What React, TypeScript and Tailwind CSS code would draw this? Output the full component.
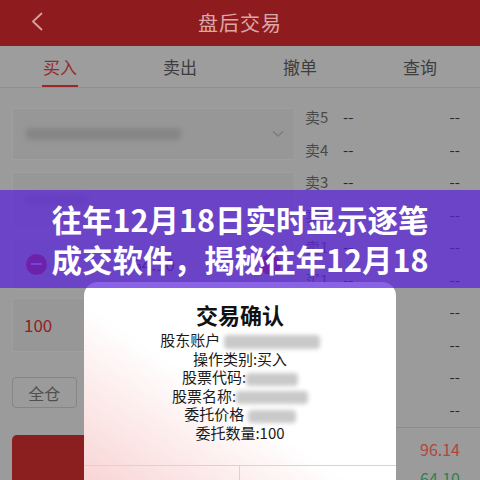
import React from 'react'

const rows = ['卖5', '卖4', '卖3', '卖2', '卖1', '买1', '买2', '买3', '买4', '买5']

const tabs = ['买入', '卖出', '撤单', '查询']

function Blur({ className, dark }: { className: string; dark?: boolean }) {
  return (
    <span
      className={`inline-block rounded-sm align-middle ${dark ? 'bg-[#868686] blur-[2.5px]' : 'bg-[#c9c9c9] blur-[2px]'} ${className}`}
    />
  )
}

function Header() {
  return (
    <div className="relative flex h-[46px] items-center justify-center bg-[#8e1c1e]">
      <svg className="absolute left-[31px] top-[12px]" width="12" height="19" viewBox="0 0 12 19" fill="none">
        <path d="M10.5 1.5 L2 9.5 L10.5 17.5" stroke="#d3a3a3" strokeWidth="1.8" strokeLinecap="round" strokeLinejoin="round" />
      </svg>
      <span className="text-[20px] leading-none tracking-[1px] text-[#dca7a7]">盘后交易</span>
    </div>
  )
}

function Tabs() {
  return (
    <div className="grid h-[42px] grid-cols-4 border-b border-[#8f8f8f] bg-[#9d9d9d]">
      {tabs.map((t, i) => (
        <div key={t} className="relative flex items-center justify-center">
          <span className={`text-[17px] leading-none ${i === 0 ? 'text-[#9a2828]' : 'text-[#3d3d3d]'}`}>{t}</span>
          {i === 0 && <span className="absolute bottom-[0px] h-[2px] w-[36px] bg-[#9a2828]" />}
        </div>
      ))}
    </div>
  )
}

function LeftPanel() {
  return (
    <div className="ml-[12px] flex w-[283px] flex-col pt-[20px]">
      <div className="flex h-[52px] items-center justify-between border border-[#9f9f9f] bg-[#979797] pl-[13px] pr-[10px]">
        <Blur dark className="h-[12px] w-[155px]" />
        <svg width="12" height="8" viewBox="0 0 12 8" fill="none">
          <path d="M1 1.5 L6 6 L11 1.5" stroke="#7c7c7c" strokeWidth="1.4" />
        </svg>
      </div>
      <div className="mt-[12px] h-[56px] border border-[#9f9f9f] bg-[#979797] pl-[13px] pt-[12px]">
        <Blur dark className="h-[10px] w-[62px]" />
      </div>
      <div className="mt-[10px] flex h-[52px] items-center justify-between border border-[#9f9f9f] bg-[#979797] px-[13px]">
        <span className="flex h-[21px] w-[21px] items-center justify-center rounded-full bg-[#9a2a3a]">
          <span className="h-[2px] w-[11px] bg-[#b89ad8]" />
        </span>
        <span className="text-[17px] text-[#333]">64.10</span>
        <span className="flex h-[21px] w-[21px] items-center justify-center rounded-full bg-[#9a2a3a]" />
      </div>
      <div className="mt-[8px] flex h-[54px] items-center border border-[#9f9f9f] bg-[#979797] pl-[11px]">
        <span className="text-[17px] text-[#8e2222]">100</span>
      </div>
      <div className="mt-[25px] grid h-[31px] grid-cols-4 gap-[8px]">
        {['全仓', '1/2', '1/3', '1/4'].map((b) => (
          <div key={b} className="flex items-center justify-center rounded-[4px] border border-[#858585] text-[16px] text-[#505050]">
            {b}
          </div>
        ))}
      </div>
      <div className="mt-[27px] h-[50px] rounded-[5px] bg-[#8b1f1f]" />
    </div>
  )
}

function OrderBook() {
  return (
    <div className="ml-[10px] flex w-[175px] flex-col pt-[13px]">
      {rows.map((r) => (
        <div key={r} className="flex h-[32.5px] items-center pr-[20px] text-[15px]">
          <span className="w-[38px] text-[#4a4a4a]">{r}</span>
          <span className="text-[#2a2a2a]">--</span>
          <span className="flex-1" />
          <span className="text-[#2a2a2a]">--</span>
        </div>
      ))}
      <div className="mt-[1px] flex flex-col items-end border-t border-[#8c8c8c] pr-[20px] pt-[10px] text-[16px]">
        <span className="leading-[22px] text-[#b3443e]">96.14</span>
        <span className="mt-[7px] leading-[22px] text-[#2f7f4f]">64.10</span>
      </div>
    </div>
  )
}

function Dialog() {
  return (
    <div className="absolute left-[84px] top-[282px] flex h-[210px] w-[312px] flex-col rounded-t-[14px] bg-linear-to-tr from-[#f8d2d2] via-white via-[45%] to-white">
      <div className="pt-[17px] text-center text-[22px] font-bold leading-[30px] text-[#111]">交易确认</div>
      <div className="mt-[2px] flex flex-col items-center text-[15px] leading-[18.6px] text-[#1a1a1a]">
        <div>
          股东账户 <Blur className="h-[14px] w-[96px]" />
        </div>
        <div>操作类别:买入</div>
        <div>
          股票代码:<Blur className="h-[13px] w-[52px]" />
        </div>
        <div>
          股票名称:<Blur className="h-[13px] w-[72px]" />
        </div>
        <div>
          委托价格 <Blur className="h-[13px] w-[48px]" />
        </div>
        <div>委托数量:100</div>
      </div>
      <div className="mt-auto grid h-[27px] grid-cols-2 border-t border-[#efcaca]">
        <div className="border-r border-[#efcaca]" />
        <div />
      </div>
    </div>
  )
}

function Banner() {
  return (
    <div className="absolute inset-x-0 top-[190px] flex h-[98px] flex-col items-center justify-center bg-[#581fdb]/70">
      <div className="text-center text-[30.5px] font-bold leading-[40px] text-white">
        <div>往年12月18日实时显示逐笔</div>
        <div>成交软件，揭秘往年12月18</div>
      </div>
    </div>
  )
}

export default function App() {
  return (
    <div className="relative h-[480px] w-[480px] overflow-hidden bg-[#9b9b9b] font-['Noto_Sans_CJK_SC','Noto_Sans',sans-serif]">
      <Header />
      <Tabs />
      <div className="flex">
        <LeftPanel />
        <OrderBook />
      </div>
      <Dialog />
      <Banner />
    </div>
  )
}
